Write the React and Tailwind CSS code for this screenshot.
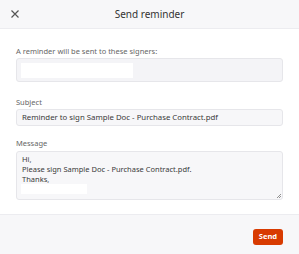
export default function App() {
  const font = { fontFamily: '"Noto Sans", "Open Sans", sans-serif' }
  return (
    <div className="w-[299px] h-[254px] bg-white flex flex-col overflow-hidden" style={font}>
      <div className="h-[29px] shrink-0 bg-[#f7f7f9] border-b border-[#ececf0] flex items-center relative">
        <svg className="absolute left-[11px] top-[10px]" width="8" height="8" viewBox="0 0 8 8">
          <path d="M0.5 0.5L7.5 7.5M7.5 0.5L0.5 7.5" stroke="#555" strokeWidth="1.2" />
        </svg>
        <div className="w-full text-center text-[10px] text-[#333]">Send reminder</div>
      </div>

      <div className="flex-1 px-[16px] pt-[17px] flex flex-col">
        <div className="text-[7.5px] text-[#666] leading-[10px]">A reminder will be sent to these signers:</div>
        <div className="mt-[2px] h-[24px] rounded-[3px] border border-[#e6e6ea] bg-[#f4f4f7] px-[4px] pt-[4px]">
          <div className="w-[112px] h-[15px] bg-white" />
        </div>

        <div className="mt-[15px] text-[7.5px] text-[#666] leading-[10px]">Subject</div>
        <div className="mt-[2px] h-[17px] rounded-[3px] border border-[#e6e6ea] bg-[#f7f7f9] px-[5px] flex items-center text-[7.8px] text-[#3a3a3a]">
          Reminder to sign Sample Doc - Purchase Contract.pdf
        </div>

        <div className="mt-[12px] text-[7.5px] text-[#666] leading-[10px]">Message</div>
        <div className="mt-[3px] h-[49px] rounded-[3px] border border-[#e6e6ea] bg-[#f7f7f9] px-[5px] pt-[2px] text-[7.5px] leading-[10px] text-[#3a3a3a] relative">
          <div>Hi,</div>
          <div>Please sign Sample Doc - Purchase Contract.pdf.</div>
          <div>Thanks,</div>
          <div className="w-[66px] h-[10px] bg-white -ml-[1px]" />
          <svg className="absolute right-[1px] bottom-[1px]" width="5" height="5" viewBox="0 0 5 5">
            <path d="M1 5L5 1M3 5L5 3" stroke="#777" strokeWidth="0.8" />
          </svg>
        </div>
      </div>

      <div className="h-[40px] shrink-0 bg-[#f7f7f9] border-t border-[#ececf0] flex items-start justify-end px-[16px] pt-[14px]">
        <button className="h-[16px] px-[6px] rounded-[3px] bg-[#d83b01] text-white text-[7.5px] font-bold">Send</button>
      </div>
    </div>
  )
}
